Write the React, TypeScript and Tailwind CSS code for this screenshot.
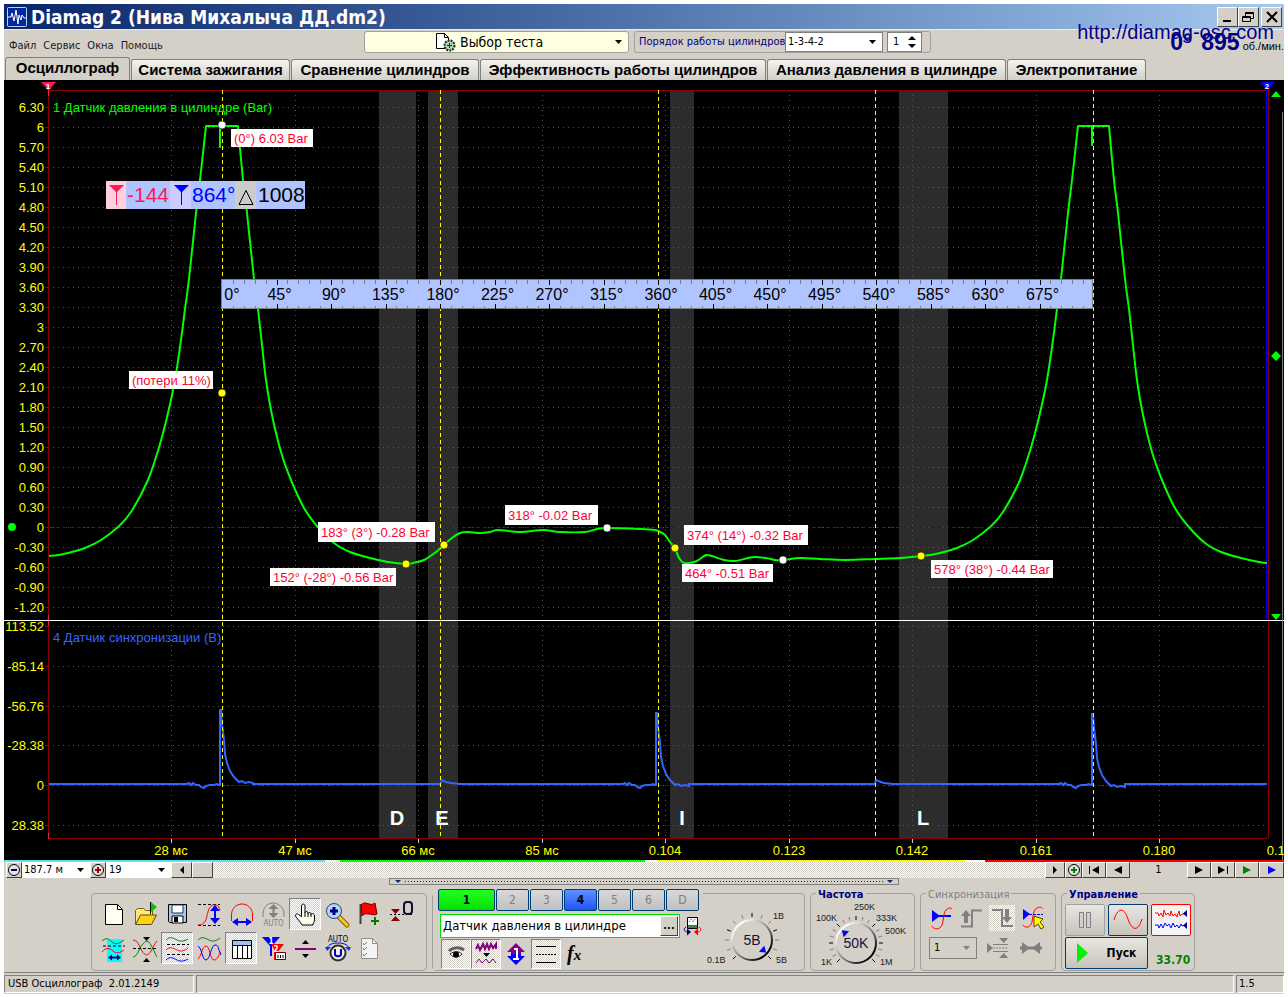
import { useState } from "react";
import type { ReactNode } from "react";

type Pt = [number, number];

const TABS = [
  { name: "Осциллограф", width: "w-[125px]" },
  { name: "Система зажигания", width: "w-[159px]" },
  { name: "Сравнение цилиндров", width: "w-[188px]" },
  { name: "Эффективность работы цилиндров", width: "w-[286px]" },
  { name: "Анализ давления в цилиндре", width: "w-[239px]" },
  { name: "Электропитание", width: "w-[139px]" },
];

const PRESSURE_TICKS = [
  "6.30", "6", "5.70", "5.40", "5.10", "4.80", "4.50", "4.20", "3.90", "3.60", "3.30", "3", "2.70",
  "2.40", "2.10", "1.80", "1.50", "1.20", "0.90", "0.60", "0.30", "0", "-0.30", "-0.60", "-0.90", "-1.20",
];

const SYNC_TICKS = [
  { y: 626, label: "113.52" },
  { y: 666, label: "-85.14" },
  { y: 706, label: "-56.76" },
  { y: 745, label: "-28.38" },
  { y: 785, label: "0" },
  { y: 825, label: "28.38" },
];

const TIME_TICKS = [
  { x: 171, label: "28 мс" },
  { x: 295, label: "47 мс" },
  { x: 418, label: "66 мс" },
  { x: 542, label: "85 мс" },
  { x: 665, label: "0.104" },
  { x: 789, label: "0.123" },
  { x: 912, label: "0.142" },
  { x: 1036, label: "0.161" },
  { x: 1159, label: "0.180" },
  { x: 1283, label: "0.199" },
];

const ZONES = [
  { x: 379, w: 37, letter: "D", at: 397 },
  { x: 428, w: 30, letter: "E", at: 442 },
  { x: 670, w: 24, letter: "I", at: 682 },
  { x: 899, w: 49, letter: "L", at: 923 },
];

const CYCLE_LINES = [222, 440, 658, 875, 1093];

const NOTES = [
  { x: 231, y: 129, w: 82, h: 18, text: "(0°) 6.03 Bar" },
  { x: 129, y: 371, w: 84, h: 18, text: "(потери 11%)" },
  { x: 270, y: 568, w: 126, h: 18, text: "152° (-28°) -0.56 Bar" },
  { x: 318, y: 522, w: 117, h: 20, text: "183° (3°) -0.28 Bar" },
  { x: 505, y: 505, w: 93, h: 20, text: "318° -0.02 Bar" },
  { x: 684, y: 525, w: 124, h: 20, text: "374° (14°) -0.32 Bar" },
  { x: 682, y: 564, w: 91, h: 18, text: "464° -0.51 Bar" },
  { x: 931, y: 560, w: 122, h: 18, text: "578° (38°) -0.44 Bar" },
];

const DOTS = [
  { x: 222, y: 125, c: "#fff" },
  { x: 222, y: 393, c: "#ff0" },
  { x: 406, y: 564, c: "#ff0" },
  { x: 444, y: 545, c: "#ff0" },
  { x: 607, y: 528, c: "#fff" },
  { x: 675, y: 548, c: "#ff0" },
  { x: 783, y: 560, c: "#fff" },
  { x: 921, y: 556, c: "#ff0" },
];

const RISE: Pt[] = [
  [49, 556], [58, 555], [68, 553], [85, 548], [101, 540], [118, 527], [131, 512], [148, 480], [160, 444],
  [168, 413], [175, 380], [181, 340], [185, 309], [189, 279], [196, 213], [200, 180], [206, 126],
];

const FALL: Pt[] = [
  [238, 126], [243, 180], [247, 213], [254, 279], [258, 309], [262, 345], [266, 380], [272, 415],
  [281, 452], [291, 480], [304, 508], [317, 526], [334, 543], [350, 552], [370, 558], [388, 562],
];

const MIDDLE: Pt[] = [
  [406, 564], [413, 563], [424, 560], [436, 552], [444, 545], [452, 538], [460, 533], [468, 532], [480, 533],
  [490, 532], [498, 530], [520, 532], [543, 530], [560, 532], [585, 532], [597, 529], [607, 528], [640, 529],
  [655, 530], [660, 532], [665, 535], [670, 542], [675, 548], [679, 558], [684, 563], [694, 562], [700, 559],
  [706, 555], [712, 556], [724, 560], [735, 561], [748, 558], [755, 557], [766, 558], [775, 560], [783, 560],
  [800, 558], [820, 559], [845, 560], [875, 559], [900, 558],
];

const CYCLE = 872;
const shift = (pts: Pt[], dx: number): Pt[] => pts.map(([x, y]) => [x + dx, y]);

// Catmull-Rom through the samples
function smooth(pts: Pt[], start = "M") {
  let d = `${start}${pts[0][0]} ${pts[0][1]}`;
  for (let i = 0; i < pts.length - 1; i++) {
    const p0 = pts[i - 1] ?? pts[i];
    const p1 = pts[i];
    const p2 = pts[i + 1];
    const p3 = pts[i + 2] ?? p2;
    d += `C${p1[0] + (p2[0] - p0[0]) / 6} ${p1[1] + (p2[1] - p0[1]) / 6} ${p2[0] - (p3[0] - p1[0]) / 6} ${p2[1] - (p3[1] - p1[1]) / 6} ${p2[0]} ${p2[1]}`;
  }
  return d;
}

const PRESSURE_PATH =
  smooth(RISE) +
  "H220V147V126" +
  smooth([...FALL, ...MIDDLE, [921, 556], ...shift(RISE.slice(1), CYCLE)], "L") +
  "H1092V145V126" +
  smooth([...shift(FALL, CYCLE - 1), [1267, 563]], "L");

const spike = (x: number, top: number) =>
  `H${x - 33}l2-1 2 2 2-2 3 2 3 0 2 2 3 1 2-2 4-1 4 0 3-1 2 1H${x}V${top}h1l1 14 2 16 1 14 2 9 3 8 4 6 5 5 3-1 3 2 4-1 4 1V784`;
const SYNC_PATH = `M49 784${spike(220, 710)}H440l2-4 4 2 5 1 9 1${spike(656, 713)}H875l1-4 5 2 3 1 9 1${spike(1092, 714)}H1267`;

const ctl = "border border-white border-r-[#404040] border-b-[#404040] bg-[#d4d0c8] flex items-center justify-center shrink-0";
const hatch = "bg-[repeating-conic-gradient(#ffffff_0_25%,#d4d0c8_0_50%)] bg-[length:2px_2px]";

function Chart() {
  return (
    <svg viewBox="4 80 1280 780" className="block w-full bg-black font-['Liberation_Sans',sans-serif]" role="img" aria-label="Осциллограмма">
      <g shapeRendering="crispEdges">
        {ZONES.map((z) => <rect key={z.letter} x={z.x} y={91} width={z.w} height={747} fill="#2c2c2c" />)}
        {PRESSURE_TICKS.map((t, i) => (
          <path key={t} d={`M53 ${107.5 + i * 20}H1267`} stroke="#555" strokeDasharray="1 4" />
        ))}
        {SYNC_TICKS.map((t) => <path key={t.label} d={`M53 ${t.y + 0.5}H1267`} stroke="#555" strokeDasharray="1 4" />)}
        {TIME_TICKS.slice(0, 9).map((t) => (
          <g key={t.label}>
            <path d={`M${t.x + 0.5} 95V838`} stroke="#555" strokeDasharray="1 4" />
            <path d={`M${t.x + 0.5} 839v4`} stroke="#ccc" />
          </g>
        ))}
        <path d="M49 527.5H1267M49 785.5H1267" stroke="#8b0000" strokeDasharray="4 3" />
        <path d="M48.5 90V838.5H1268" fill="none" stroke="#8b0000" />
        <path d="M48 90.5H1268V838" fill="none" stroke="#8b0000" />
        <path d="M1266.5 90V620" stroke="#0000ff" />
        <path d="M48.5 84V96M48.5 615V626M48.5 833V839" stroke="#ff1a55" />
        {PRESSURE_TICKS.map((t, i) => <path key={t} d={`M45 ${107.5 + i * 20}h4`} stroke="#8b0000" />)}
        {SYNC_TICKS.map((t) => <path key={t.label} d={`M45 ${t.y + 0.5}h4`} stroke="#8b0000" />)}
        <path d="M4 620.5H1284" stroke="#fff" />
        <path d="M1282.500 112V860" stroke="#808080" />
      </g>

      <g fill="#ffff00" fontSize="13">
        {PRESSURE_TICKS.map((t, i) => <text key={t} x={44} y={112 + i * 20} textAnchor="end">{t}</text>)}
        {SYNC_TICKS.map((t) => <text key={t.label} x={44} y={t.y + 5} textAnchor="end">{t.label}</text>)}
        {TIME_TICKS.map((t) => <text key={t.label} x={t.x} y={855} textAnchor="middle">{t.label}</text>)}
      </g>

      <path d={SYNC_PATH} fill="none" stroke="#3366ff" strokeWidth="2" />
      <path d={PRESSURE_PATH} fill="none" stroke="#00ff00" strokeWidth="2" strokeLinejoin="round" />
      {CYCLE_LINES.map((x) => (
        <path key={x} d={`M${x + 0.5} 90V838`} stroke="#ffff00" strokeDasharray="4 3" shapeRendering="crispEdges" />
      ))}

      <text x={53} y={112} fontSize="13" fill="#00ff00">1 Датчик давления в цилиндре (Bar)</text>
      <text x={53} y={642} fontSize="13" fill="#3366ff">4 Датчик синхронизации (В)</text>
      {ZONES.map((z) => (
        <text key={z.letter} x={z.at} y={825} textAnchor="middle" fontSize="20" fontWeight="bold" fill="#fff">{z.letter}</text>
      ))}

      <path d="M41 82h15l-7 8h-1z" fill="#ff1a55" />
      <path d="M1260 82h15l-7 8h-1z" fill="#0000ff" />
      <text x={48} y={89} textAnchor="middle" fontSize="8" fontWeight="bold" fill="#fff">1</text>
      <text x={1267} y={89} textAnchor="middle" fontSize="8" fontWeight="bold" fill="#fff">2</text>
      <g fill="#00ff00">
        <path d="M1271 97h10l-5-6z" />
        <path d="M1276 351l5 5-5 5-5-5z" />
        <path d="M1271 614h10l-5 6z" />
        <circle cx={12} cy={527} r={4} />
      </g>

      {/* cursor readout */}
      <rect x={106} y={181} width={199} height={28} fill="#b0c4ff" />
      <rect x={106} y={181} width={20} height={28} fill="#ffd0e0" />
      <rect x={170} y={181} width={21} height={28} fill="#ccccff" />
      <rect x={235} y={181} width={21} height={28} fill="#cccccc" />
      <path d="M109 185h15l-7 7v13h-1v-13z" fill="#ff1a55" />
      <path d="M174 185h15l-7 7v13h-1v-13z" fill="#0000ff" />
      <path d="M246 190.500l7 14h-14z" fill="none" stroke="#000" />
      <g fontSize="21">
        <text x={127} y={202} fill="#ff1a55">-144</text>
        <text x={192} y={202} fill="#0000ff">864°</text>
        <text x={258} y={202} fill="#000">1008</text>
      </g>

      {/* degree ruler */}
      <rect x={221.500} y={279.500} width={871} height={29} fill="#b0c4ff" stroke="#808080" />
      {Array.from({ length: 79 }, (_, i) => {
        const x = Math.round(222 + (i + 1) * 10.9) + 0.5;
        return (i + 1) % 5 === 0 ? (
          <path key={i} d={`M${x} 280v5M${x} 304v5`} stroke="#000" />
        ) : (
          <path key={i} d={`M${x} 280v4M${x} 306v2`} stroke="#808080" />
        );
      })}
      {Array.from({ length: 16 }, (_, i) => (
        <text key={i} x={i ? 225 + i * 54.5 : 232} y={300} textAnchor="middle" fontSize="16">{i * 45}°</text>
      ))}

      {NOTES.map((n) => (
        <g key={n.text}>
          <rect x={n.x} y={n.y} width={n.w} height={n.h} fill="#fff" />
          <text x={n.x + 3} y={n.y + n.h / 2 + 5} fontSize="13" fill="#ff0033">{n.text}</text>
        </g>
      ))}
      {DOTS.map((p) => <circle key={p.x + p.y} cx={p.x} cy={p.y} r={4} fill={p.c} stroke="#000" strokeWidth="0.6" />)}
    </svg>
  );
}

function Arrow({ d, fill = "#000" }: { d: string; fill?: string }) {
  return <svg width="12" height="10" viewBox="0 0 12 10" aria-hidden="true"><path d={d} fill={fill} /></svg>;
}

const RIGHT = "M2 1l8 4-8 4z";
const LEFT = "M10 1L2 5l8 4z";

interface DropProps {
  label: string;
  value: string;
  wrap: string;
  text: string;
  arrow?: string;
  disabled?: boolean;
  children?: ReactNode;
}

function Drop({ label, value, wrap, text, arrow = "#000", disabled, children }: DropProps) {
  return (
    <span className={`relative flex shrink-0 items-center ${wrap}`}>
      {children}
      <select aria-label={label} disabled={disabled} className={`h-full w-full appearance-none bg-transparent text-black outline-none ${text}`}>
        <option>{value}</option>
      </select>
      <svg className="pointer-events-none absolute right-[6px]" width="7" height="4" viewBox="0 0 7 4" aria-hidden="true">
        <path d="M0 0h7L3.500 4z" fill={arrow} />
      </svg>
    </span>
  );
}

function Tool({ title, pressed, children }: { title: string; pressed?: boolean; children: ReactNode }) {
  return (
    <button
      type="button"
      title={title}
      className={`size-8 border ${pressed ? `border-[#808080] border-r-white border-b-white ${hatch}` : "border-transparent"}`}
    >
      <svg width="30" height="30" viewBox="1 1 30 30" fill="none" aria-hidden="true">{children}</svg>
    </button>
  );
}

function Group({ title, tone, className, children }: { title?: string; tone?: string; className: string; children: ReactNode }) {
  return (
    <section className={`relative h-[78px] shrink-0 rounded-[4px] border border-[#a0a0a0] ${className}`}>
      {title && <h2 className={`absolute -top-[6px] left-[5px] bg-[#d4d0c8] px-[2px] text-[11px] leading-[13px] ${tone}`}>{title}</h2>}
      {children}
    </section>
  );
}

function MainTools() {
  return (
    <Group className="w-[336px]">
      <div className="grid grid-cols-[repeat(10,32px)] gap-y-[2px] pt-[4px] pl-[5px]">
        <Tool title="Новый">
          <path d="M8.500 6.500h12l5 5v15h-17z" fill="#fffff0" stroke="#000" />
          <path d="M20.500 6.500v5h5" stroke="#000" />
        </Tool>
        <Tool title="Открыть">
          <path d="M6.500 26V12.500l2-2h6l2 2h7V17" fill="#ffe680" stroke="#806000" />
          <path d="M6.500 26.500l5-9.500h16l-5 9.500z" fill="#ffd21a" stroke="#604800" />
          <path d="M21.500 4v12" stroke="#000" />
          <path d="M22 4l6 5-6 5z" fill="#00c800" />
        </Tool>
        <Tool title="Сохранить">
          <path d="M7.500 6.500h18v18h-17l-1-1z" fill="#a8c8f0" stroke="#000" />
          <path d="M11 7h11v8H11z" fill="#fff" stroke="#203060" />
          <path d="M11 18h11v7H11z" fill="#fff" stroke="#000" />
          <path d="M13 19h4v5h-4z" fill="#000" />
        </Tool>
        <Tool title="Размах по вертикали">
          <path d="M5 6.500h22M5 27.500h22" stroke="#000" strokeDasharray="3 2" />
          <path d="M5 27c8 0 8-6 10-13 1-5 4-8 8-7 3 1 3 3 4 5" stroke="#f00" />
          <path d="M22 9v15" stroke="#00f" strokeWidth="2" />
          <path d="M22 7l5 6H17zM22 26l5-6H17z" fill="#00f" />
        </Tool>
        <Tool title="Размах по горизонтали">
          <path d="M6.500 23v-6c0-7 5-11 10.500-11s10.500 4 10.500 11v6" stroke="#f00" />
          <path d="M9 24h16" stroke="#00f" strokeWidth="2" />
          <path d="M7 24l6-4v8zM27 24l-6-4v8z" fill="#00f" />
        </Tool>
        <Tool title="Автомасштаб">
          <path d="M6 19v-3C6 9 11 5 16 5s11 4 11 11v3" stroke="#808080" />
          <path d="M16.500 8v11" stroke="#808080" strokeWidth="2" />
          <path d="M16.500 6l5 5h-10zM16.500 20l5-5h-10z" fill="#808080" />
          <text x="16.500" y="28" textAnchor="middle" fontSize="8" fill="#808080">AUTO</text>
        </Tool>
        <Tool title="Рука" pressed>
          <path
            d="M12.500 18.500V8c0-2.500 3.500-2.500 3.500 0v7c0-2 3-2 3 0v1c0-2 3-2 3 0v1c0-2 3.500-2 3.500 1v4c0 2-1.500 3-1.500 5H13c-1-3-6-7-6.500-9s2-3 3.500-1z"
            fill="#fffff0" stroke="#000"
          />
          <path d="M16 15v4M19 16v3M22 17v2" stroke="#000" />
        </Tool>
        <Tool title="Лупа">
          <path d="M18 19l8 8" stroke="#806000" strokeWidth="5" strokeLinecap="round" />
          <path d="M18 19l8 8" stroke="#ffc820" strokeWidth="3" strokeLinecap="round" />
          <circle cx="13" cy="13" r="7.500" fill="#b0d8f8" stroke="#304080" />
          <path d="M13 9v8M9 13h8" stroke="#000080" strokeWidth="3" />
        </Tool>
        <Tool title="Поставить метку">
          <path d="M7.500 6v20" stroke="#404040" strokeWidth="2" />
          <path d="M8 7c3-3 5-2 8-1s4 0 6-1l2 11c-3 2-5 0-8 0s-4-1-7 2z" fill="#f00" stroke="#600" />
          <path d="M22 19v8M18 23h8" stroke="#008000" strokeWidth="2" />
        </Tool>
        <Tool title="Обнулить">
          <path d="M5 16.500h23" stroke="#000" strokeDasharray="2 2" />
          <path d="M6 11h9l-4.500 5zM6 23h9l-4.500-5z" fill="#800000" />
          <rect x="19" y="4" width="8" height="12" rx="3" fill="#d4d0c8" stroke="#101030" strokeWidth="2" />
        </Tool>

        <Tool title="Совместить">
          <path d="M10 7h15v23H10z" fill="#00ffff" />
          <path d="M5 9c4-4 7-2 10 1s7 2 12-2" stroke="#008000" />
          <path d="M6 14h22" stroke="#000" strokeDasharray="3 2" />
          <path d="M5 20c4-5 8-4 11-1s7 2 11-1" stroke="#f00" />
          <path d="M13 25.500h9" stroke="#000080" strokeWidth="2" />
          <path d="M11 25.500l4-3v6zM24 25.500l-4-3v6z" fill="#000080" />
        </Tool>
        <Tool title="Симметрия">
          <path d="M4 8c5 0 6 6 9 11s6 5 9 0 4-8 6-10" stroke="#f00" />
          <path d="M4 25c5-1 5-7 9-12s6-5 9 0 4 9 6 12" stroke="#008000" />
          <path d="M4 16.500h24" stroke="#000" strokeDasharray="3 2" />
          <path d="M14 5h7l-3.500 4zM14 30h7l-3.500-4z" fill="#000" />
        </Tool>
        <Tool title="Раздельно" pressed>
          <path d="M5 8c4-4 7-2 11 0s7 1 11-1" stroke="#008000" />
          <path d="M6 12.500h22M6 22.500h22" stroke="#000" strokeDasharray="3 2" />
          <path d="M5 18c4-4 7-2 11 0s7 1 11-2" stroke="#f00" />
          <path d="M5 28c4-4 7-2 11 0s7 1 11-1" stroke="#00f" />
        </Tool>
        <Tool title="Вместе">
          <path d="M5 8c4-4 7-2 11 0s7 1 11-2" stroke="#008000" />
          <path d="M5 27c4-4 4-13 8-13s4 14 8 14 4-5 7-8" stroke="#f00" />
          <path d="M5 14c4 2 4 14 8 14s5-15 9-15 3 4 6 10" stroke="#00f" />
        </Tool>
        <Tool title="Таблица" pressed>
          <path d="M7.500 8.500h19v18h-19z" fill="#fff" stroke="#000" />
          <path d="M8 9h18v4H8z" fill="#a0c0f0" />
          <path d="M7 13.500h19M12.500 13v13M17.500 13v13M22.500 13v13" stroke="#000" />
        </Tool>
        <Tool title="Линейки">
          <path d="M5 5h18l-8 9v10h-2V14z" fill="#00f" />
          <path d="M14 12h13l-7 9v7h-3V17z" fill="#f00" />
          <text x="14" y="12" textAnchor="middle" fontSize="8" fontWeight="bold" fill="#fff">1</text>
          <text x="19" y="20" textAnchor="middle" fontSize="8" fontWeight="bold" fill="#fff">2</text>
          <path d="M18.500 20.500h10v7h-10z" fill="#fff" stroke="#600" />
          <path d="M21 23v3M23.500 23v3M26 23v3" stroke="#000" />
        </Tool>
        <Tool title="Разделитель">
          <path d="M6 17h21" stroke="#800080" strokeWidth="2" />
          <path d="M13 12h7l-3.500-4zM13 22h7l-3.500 4z" fill="#000" />
        </Tool>
        <Tool title="Авто напряжение">
          <text x="17" y="10" textAnchor="middle" fontSize="8" fill="#000">AUTO</text>
          <circle cx="17" cy="21" r="7.500" fill="#eee" stroke="#303030" strokeWidth="2" />
          <path d="M6 16c2-4 6-5 11-5s9 1 11 5" stroke="#00f" />
          <path d="M4 15h6l-4 4zM30 15h-6l4 4z" fill="#0040c0" />
          <path d="M14 17v5c0 3 6 3 6 0v-5" stroke="#0000c0" strokeWidth="2" />
        </Tool>
        <Tool title="Список">
          <path d="M8.500 6.500h11l5 5v15h-16z" fill="#f4f4f0" stroke="#909090" />
          <path d="M19.500 6.500v5h5" stroke="#909090" />
          <path d="M10 11l1 2 3-3M10 16l1 2 3-3M10 22l1 2 3-3" stroke="#808080" />
        </Tool>
      </div>
    </Group>
  );
}

const CHANNELS = ["1", "2", "3", "4", "5", "6", "D"];

function ChannelButton({ name }: { name: string }) {
  const look =
    name === "1" ? "w-[57px] bg-linear-to-b from-[#20ff20] to-[#00e000] font-bold text-black"
    : name === "4" ? "w-[33px] bg-linear-to-b from-[#6090ff] to-[#2050ff] font-bold text-black"
    : "w-[33px] bg-linear-to-b from-[#d8d8d8] to-[#c0c0c0] text-[#808080]";
  return (
    <button type="button" className={`h-[22px] rounded-[2px] border border-[#003c74] text-[12px] leading-[20px] ${look}`}>{name}</button>
  );
}

function Knob({ cx, cy, ticks, pointer, value, labels }: { cx: number; cy: number; ticks: number; pointer: number; value: string; labels: [number, number, string][] }) {
  return (
    <svg width="102" height="76" viewBox="0 0 102 76" className="shrink-0 font-['Liberation_Sans',sans-serif]" role="img" aria-label={value}>
      <defs>
        <linearGradient id={`rim${cx}`} x1="0" y1="0" x2="1" y2="1">
          <stop offset="0.15" stopColor="#fff" />
          <stop offset="0.55" stopColor="#808080" />
          <stop offset="0.85" stopColor="#000" />
        </linearGradient>
      </defs>
      {Array.from({ length: ticks }, (_, i) => {
        const a = ((135 + (270 / (ticks - 1)) * i) * Math.PI) / 180;
        return (
          <path
            key={i}
            d={`M${cx + Math.cos(a) * 23} ${cy + Math.sin(a) * 23}L${cx + Math.cos(a) * 27} ${cy + Math.sin(a) * 27}`}
            stroke={i % 3 ? "#808080" : "#000"}
          />
        );
      })}
      <circle cx={cx} cy={cy} r={20} fill="#d4d0c8" stroke={`url(#rim${cx})`} strokeWidth="2" />
      <path d="M19 0l-6-4v8z" fill="#0000ff" transform={`translate(${cx} ${cy}) rotate(${pointer})`} />
      <text x={cx} y={cy + 5} textAnchor="middle" fontSize="14" fill="#101040">{value}</text>
      {labels.map(([x, y, t]) => <text key={t} x={x} y={y} fontSize="9" fill="#202020">{t}</text>)}
    </svg>
  );
}

function ChannelPanel() {
  const [name, setName] = useState("Датчик давления в цилиндре");
  return (
    <Group className="flex w-[373px]">
      <div className="-mt-[5px] w-[270px] shrink-0 bg-[#d4d0c8] pl-[5px]">
        <div className="flex gap-px">
          {CHANNELS.map((c) => <ChannelButton key={c} name={c} />)}
        </div>
        <div className="mt-[3px] ml-[2px] flex items-center gap-[3px]">
          <span className="flex h-[24px] w-[241px] items-center border border-[#00e000] bg-white pr-px">
            <input
              aria-label="Название канала"
              value={name}
              onChange={(e) => setName(e.target.value)}
              className="min-w-0 flex-1 px-[2px] text-[13px] text-black outline-none"
            />
            <button type="button" title="Выбрать" className={`${ctl} h-[20px] w-[18px] text-[11px] leading-[12px] font-bold`}>...</button>
          </span>
          <button type="button" title="Поменять каналы">
            <svg width="20" height="20" viewBox="0 0 20 20" fill="none" aria-hidden="true">
              <path d="M4.500 1.500h10v11h-10z" fill="#fff" stroke="#000" />
              <path d="M5 9h9v3H5z" fill="#408040" />
              <path d="M6 6l2-3 2 3 2-3" stroke="#444" strokeDasharray="1 1" />
              <path d="M3 11c-3 2-2 5 2 5" stroke="#000080" />
              <path d="M4 12.500l4 3.500-4 3.500z" fill="#000080" />
              <path d="M16 11c3 2 2 5-2 5" stroke="#f00" />
              <path d="M15 12.500l-4 3.500 4 3.500z" fill="#f00" />
            </svg>
          </button>
        </div>
        <div className="mt-px ml-[3px] flex h-[30px] items-center">
          <Small title="Показать" pressed>
            <path d="M8 12c4-4 11-4 15-1" stroke="#606060" strokeWidth="3" />
            <path d="M9 15c4-3 9-3 12 0-3 4-9 4-12 0z" fill="#fff" stroke="#222" />
            <circle cx="15" cy="15.500" r="3" fill="#000" />
          </Small>
          <Small title="Фильтр" pressed>
            <path d="M5 10l2-4 2 5 3-6 2 5 2-5 2 5 2-5 2 4 3-4v5" stroke="#800080" strokeWidth="2" />
            <path d="M12 14h7l-3.500 4z" fill="#000" />
            <path d="M5 24l3-4 3 4 4-4 3 4 4-4 3 4" stroke="#800080" />
          </Small>
          <Small title="Инвертировать">
            <path d="M15 4l9 9h-4v2H10v-2H6z" fill="#800080" />
            <path d="M15 26l9-9h-4v-2H10v2H6z" fill="#00f" />
            <path d="M13 10h3v9M12 20h6" stroke="#fff" strokeWidth="2" />
          </Small>
          <Small title="Линии" pressed>
            <path d="M5 7.500h20M5 23.500h20" stroke="#000" />
            <path d="M5 15.500h20" stroke="#000" strokeDasharray="2 1" />
          </Small>
          <button type="button" title="Функция" className="px-[6px] font-['Liberation_Serif',serif] text-[20px] leading-[22px] font-bold text-black italic">
            f<span className="text-[15px]">x</span>
          </button>
        </div>
      </div>
      <Knob
        cx={49} cy={46} ticks={13} pointer={42} value="5В"
        labels={[[4, 69, "0.1В"], [70, 25, "1В"], [73, 69, "5В"]]}
      />
    </Group>
  );
}

function Small({ title, pressed, children }: { title: string; pressed?: boolean; children: ReactNode }) {
  return (
    <button
      type="button"
      title={title}
      className={`size-[30px] border ${pressed ? `border-[#808080] border-r-white border-b-white ${hatch}` : "border-transparent"}`}
    >
      <svg width="28" height="28" viewBox="1 1 28 28" fill="none" aria-hidden="true">{children}</svg>
    </button>
  );
}

function SyncPanel() {
  return (
    <Group title="Синхронизация" tone="text-[#808080]" className="w-[136px]">
      <div className="flex flex-col gap-[6px] pt-[11px] pl-[8px]">
        <div className="flex items-center gap-[6px]">
          <button type="button" title="Уровень">
            <svg width="24" height="26" viewBox="0 0 24 26" fill="none" aria-hidden="true">
              <path d="M3 5l8 6-8 6z" fill="#00f" />
              <path d="M10 11h12" stroke="#00f" strokeWidth="2" />
              <path d="M3 21c2 4 8 4 10-1s1-12 4-15 5-2 6-1" stroke="#f00" />
            </svg>
          </button>
          <button type="button" title="По фронту">
            <svg width="24" height="26" viewBox="0 0 24 26" fill="none" aria-hidden="true">
              <path d="M2 21.500h11V5.500h10" stroke="#808080" strokeWidth="2" />
              <path d="M7 5l5 6H9v7H5v-7H2z" fill="#808080" />
            </svg>
          </button>
          <button type="button" title="По спаду" className={hatch}>
            <svg width="26" height="26" viewBox="0 0 26 26" fill="none" aria-hidden="true">
              <path d="M3 5h10v16h11" stroke="#808080" strokeWidth="2" />
              <path d="M18 18l5-6h-3V4h-4v8h-3z" fill="#808080" />
            </svg>
          </button>
          <button type="button" title="Выбрать уровень">
            <svg width="24" height="26" viewBox="0 0 24 26" fill="none" aria-hidden="true">
              <path d="M2 4l7 5-7 6z" fill="#00f" />
              <path d="M8 9.500h14" stroke="#00f" strokeDasharray="3 1" />
              <path d="M2 20c3 4 8 2 9-3s1-12 5-14 5 0 6 1" stroke="#f00" />
              <path d="M13 11l9 3-3 3 4 5-3 2-3-5-4 3z" fill="#ff0" stroke="#604000" />
            </svg>
          </button>
        </div>
        <div className="flex items-center gap-[9px]">
          <Drop label="Канал синхронизации" value="1" wrap="h-[22px] w-[48px] border border-[#808080]" text="pl-[4px] text-[11px]" arrow="#808080" disabled />
          <button type="button" title="Порог">
            <svg width="24" height="22" viewBox="0 0 24 22" aria-hidden="true">
              <path d="M1 6l6 5-6 5zM13 1h9l-4 5zM13 21h9l-4-5z" fill="#808080" />
              <path d="M7 7.500h15M7 14.500h15" stroke="#808080" />
              <path d="M7 11h15" stroke="#808080" strokeDasharray="2 1" />
            </svg>
          </button>
          <button type="button" title="Сжать">
            <svg width="24" height="22" viewBox="0 0 24 22" aria-hidden="true">
              <path d="M11 11L3 5v12zM13 11l8-6v12z" fill="#808080" />
              <path d="M1 11h22" stroke="#808080" strokeWidth="3" />
            </svg>
          </button>
        </div>
      </div>
    </Group>
  );
}

function ControlPanel() {
  const face = "flex items-center justify-center rounded-[2px] border bg-linear-to-b from-[#e8e6e2] to-[#c8c4bc]";
  return (
    <Group title="Управление" tone="font-bold text-[#000080]" className="w-[134px]">
      <div className="grid grid-cols-[repeat(3,40px)] gap-x-[3px] gap-y-px pt-[10px] pl-[3px]">
        <button type="button" title="Пауза" className={`${face} h-[32px] border-[#a0a0a0]`}>
          <svg width="14" height="18" viewBox="0 0 14 18" fill="#d0d0d0" stroke="#808080" aria-hidden="true">
            <path d="M1.500 1.500h4v15h-4zM8.500 1.500h4v15h-4z" />
          </svg>
        </button>
        <button type="button" title="Непрерывно" className={`${face} h-[32px] border-[#003c74]`}>
          <svg width="30" height="22" viewBox="0 0 30 22" fill="none" stroke="#f00" aria-hidden="true">
            <path d="M1 11C5-2 11-2 15 10s10 13 14 0" />
          </svg>
        </button>
        <button type="button" title="Запись" className="flex h-[32px] items-center justify-center rounded-[2px] border border-[#f00] bg-[#f4f4f4]">
          <svg width="34" height="22" viewBox="0 0 34 22" fill="none" aria-hidden="true">
            <path d="M1 4h3l1 3 2-3 2 4 1-7 2 5 2-2 2 3 1-5 2 5 2-2 2 3 2-6 1 5 2-2h4" stroke="#f00" />
            <path d="M1 16h3l1 3 2-4 2 4 2-5 2 3 2-2 2 4 2-5 2 4 2-2 2 3 2-4 1 2 3-1h1" stroke="#00f" />
            <path d="M33 1v7l-4-3.500zM33 13v7l-4-3.500z" fill="#000080" />
          </svg>
        </button>
        <button type="button" className={`${face} col-span-2 h-[32px] gap-[18px] border-[#003c74] text-[12px] font-bold text-black`}>
          <svg width="12" height="20" viewBox="0 0 12 20" aria-hidden="true"><path d="M0 0l11 10L0 20z" fill="#00f000" /></svg>
          Пуск
        </button>
        <output className="self-end pb-[2px] pl-[5px] text-[12px] leading-[14px] font-bold text-[#008000]">33.70</output>
      </div>
    </Group>
  );
}

export default function App() {
  const [tab, setTab] = useState(0);
  const [cyl, setCyl] = useState("1");

  return (
    <div className="min-h-screen bg-white px-[4px] pt-[4px] font-['DejaVu_Sans_Condensed','DejaVu_Sans',sans-serif] text-black">
      <div className="bg-[#d4d0c8]">
        <header className="flex h-[25px] items-center gap-[4px] bg-linear-to-r from-[#0a246a] to-[#a6caf0] pr-[2px] pl-[3px]">
          <svg width="20" height="20" viewBox="0 0 20 20" fill="none" aria-hidden="true">
            <rect x="0.500" y="0.500" width="19" height="19" rx="1" fill="#0028a0" stroke="#c0d0f0" />
            <path d="M1 10h3l1-4 2 8 2-11 2 14 1-9 2 5 1-5 2 3h2" stroke="#fff" />
          </svg>
          <h1 className="text-[19px] leading-[24px] font-bold whitespace-nowrap text-white">Diamag 2 (Нива Михалыча ДД.dm2)</h1>
          <div className="ml-auto flex">
            <button type="button" title="Свернуть" className={`${ctl} h-[20px] w-[21px]`}>
              <svg width="12" height="12" viewBox="0 0 12 12"><path d="M1 10h8" stroke="#000" strokeWidth="2" /></svg>
            </button>
            <button type="button" title="Развернуть" className={`${ctl} h-[20px] w-[21px]`}>
              <svg width="13" height="12" viewBox="0 0 13 12" fill="none" stroke="#000">
                <path d="M3.500 5V1.500h8v6H9M3 2.500h9M0.500 5.500h8v5h-8zM0 6.500h9" />
              </svg>
            </button>
            <button type="button" title="Закрыть" className={`${ctl} ml-[2px] h-[20px] w-[21px]`}>
              <svg width="12" height="12" viewBox="0 0 12 12"><path d="M1 1l10 10M11 1L1 11" stroke="#000" strokeWidth="2" /></svg>
            </button>
          </div>
        </header>

        <div className="relative flex h-[28px] items-start border-t border-white/60 pt-px">
          <nav className="flex w-[360px] shrink-0 gap-[7px] pt-[8px] pl-[5px] text-[11px] leading-[14px] text-[#202020]">
            <a href="#file">Файл</a>
            <a href="#service">Сервис</a>
            <a href="#windows">Окна</a>
            <a href="#help">Помощь</a>
          </nav>
          <Drop
            label="Выбор теста" value="Выбор теста" text="pl-[95px] text-[14px] text-[#000080]"
            wrap="h-[22px] w-[265px] rounded-[3px] border border-[#a0a0a0] bg-[#ffffe1]"
            arrow="#000"
          >
            <svg className="pointer-events-none absolute left-[71px]" width="20" height="20" viewBox="0 0 20 20" fill="none" aria-hidden="true">
              <path d="M0.500 1.500h8l4 4v11h-12z" fill="#fff" stroke="#000" />
              <path d="M8.500 1.500v4h4" stroke="#000" />
              <circle cx="13.500" cy="13.500" r="5" fill="#b0d0b0" stroke="#203020" strokeWidth="2" strokeDasharray="2 1" />
              <path d="M13.500 11v5M11 13.500h5" stroke="#203020" />
            </svg>
          </Drop>
          <div className="ml-[5px] flex h-[22px] shrink-0 items-center rounded-[3px] border border-[#a0a0a0] pr-[8px] pl-[4px]">
            <span className="w-[146px] text-[11px] whitespace-nowrap text-[#000080]">Порядок работы цилиндров</span>
            <Drop label="Порядок работы цилиндров" value="1-3-4-2" wrap="h-[20px] w-[98px] border border-[#808080] bg-white" text="pl-[2px] text-[11px]" />
            <span className="ml-[4px] flex h-[20px] w-[35px] items-center border border-[#808080] bg-white">
              <input
                aria-label="Цилиндр" value={cyl} onChange={(e) => setCyl(e.target.value)}
                className="w-[20px] pl-[5px] text-[11px] outline-none"
              />
              <svg width="8" height="14" viewBox="0 0 8 14" aria-hidden="true"><path d="M0 5h8L4 1zM0 9h8l-4 4z" /></svg>
            </span>
          </div>
          <p className="ml-auto flex items-baseline gap-[3px] font-['Liberation_Sans',sans-serif] whitespace-nowrap text-[#000080]">
            <span className="text-[23px] leading-[22px] font-bold">0°</span>
            <span className="ml-[6px] text-[23px] leading-[22px] font-bold">895</span>
            <span className="text-[11px] text-black">об./мин.</span>
          </p>
          <a href="#site" className="absolute right-[10px] -top-[10px] font-['Liberation_Sans',sans-serif] text-[20px] leading-[24px] text-[#000090]">http://diamag-osc.com</a>
        </div>

        <div role="tablist" className="flex h-[23px] items-end gap-px pl-px font-['Liberation_Sans',sans-serif] text-[15px] font-bold">
          {TABS.map((t, i) => (
            <button
              key={t.name}
              type="button"
              role="tab"
              aria-selected={i === tab}
              onClick={() => setTab(i)}
              className={`flex justify-center rounded-t-[3px] border border-b-0 border-[#808080] leading-[19px] whitespace-nowrap ${t.width} ${
                i === tab ? "h-[23px] bg-[#d4d0c8]" : "h-[21px] bg-linear-to-b from-[#f4f3f1] to-[#d4d0c8]"
              }`}
            >
              {t.name}
            </button>
          ))}
        </div>

        <Chart />

        <div className="flex h-[2px]">
          <span className="w-[321px] bg-[#60e0f0]" />
          <span className="w-[15px] bg-[#e8f8e8]" />
          <span className="w-[305px] bg-[#00ff00]" />
          <span className="w-[12px] bg-white" />
          <span className="w-[308px] bg-[#ffff00]" />
          <span className="w-[20px] bg-white" />
          <span className="flex-1 bg-[#ff0000]" />
        </div>

        <div className="flex h-[16px] items-stretch pl-[2px] text-[11px]">
          <button type="button" title="Меньше" className={`${ctl} w-[16px]`}>
            <svg width="12" height="12" viewBox="0 0 12 12" fill="#e8e6e0" stroke="#000"><circle cx="6" cy="6" r="5.500" /><path d="M3 6h6" stroke="#000080" strokeWidth="2" /></svg>
          </button>
          <Drop label="Развёртка" value="187.7 м" wrap="w-[68px] bg-white" text="pl-[2px] text-[11px]" />
          <button type="button" title="Больше" className={`${ctl} w-[16px]`}>
            <svg width="12" height="12" viewBox="0 0 12 12" fill="#e8e6e0" stroke="#000"><circle cx="6" cy="6" r="5.500" /><path d="M3 6h6M6 3v6" stroke="#a00000" strokeWidth="2" /></svg>
          </button>
          <Drop label="Шаг" value="19" wrap="w-[65px] bg-white" text="pl-[3px] text-[11px]" />
          <button type="button" title="Влево" className={`${ctl} w-[21px]`}><Arrow d="M8 1L4 5l4 4z" /></button>
          <div className={`flex flex-1 ${hatch}`}><span className={`${ctl} w-[21px]`} /></div>
          <button type="button" title="Вправо" className={`${ctl} w-[20px]`}><Arrow d="M4 1l4 4-4 4z" /></button>
          <button type="button" title="Добавить" className={`${ctl} w-[17px]`}>
            <svg width="12" height="12" viewBox="0 0 12 12" fill="#e8e6e0" stroke="#000"><circle cx="6" cy="6" r="5.500" /><path d="M3 6h6M6 3v6" stroke="#008000" strokeWidth="2" /></svg>
          </button>
          <button type="button" title="В начало" className={`${ctl} w-[24px]`}><Arrow d="M11 1L4 5l7 4zM1 1h1v8H1z" /></button>
          <button type="button" title="Назад" className={`${ctl} w-[24px]`}><Arrow d={LEFT} /></button>
          <span className="w-[57px] text-center leading-[16px]">1</span>
          <button type="button" title="Вперёд" className={`${ctl} w-[24px]`}><Arrow d={RIGHT} /></button>
          <button type="button" title="В конец" className={`${ctl} w-[24px]`}><Arrow d="M1 1l7 4-7 4zM10 1h1v8h-1z" /></button>
          <button type="button" title="Пуск кадра" className={`${ctl} w-[24px]`}><Arrow d={RIGHT} fill="#008000" /></button>
          <button type="button" title="Пуск всех" className={`${ctl} w-[25px]`}><Arrow d={RIGHT} fill="#0000ff" /></button>
        </div>

        <div className="mx-auto flex h-[7px] w-[510px] items-center gap-[4px] border border-[#808080] px-[5px]">
          <svg width="6" height="4" viewBox="0 0 6 4"><path d="M0 0h6L3 3z" fill="#0a246a" /></svg>
          <span className="h-px flex-1 bg-[repeating-linear-gradient(90deg,#0a246a_0_1px,transparent_1px_3px)]" />
          <svg width="6" height="4" viewBox="0 0 6 4"><path d="M0 0h6L3 3z" fill="#0a246a" /></svg>
        </div>

        <div className="flex gap-[5px] border-b border-[#808080] pt-[8px] pb-px pl-[87px]">
          <MainTools />
          <ChannelPanel />
          <Group title="Частота" tone="font-bold text-[#000080]" className="w-[105px]">
            <Knob
              cx={45} cy={49} ticks={19} pointer={222} value="50K"
              labels={[[43, 16, "250K"], [5, 27, "100K"], [65, 27, "333K"], [74, 40, "500K"], [10, 71, "1K"], [69, 71, "1M"]]}
            />
          </Group>
          <SyncPanel />
          <ControlPanel />
        </div>

        <footer className="flex gap-[2px] pt-[2px] pb-px text-[11px] leading-[16px]">
          <span className="w-[190px] border border-[#808080] border-r-white border-b-white pl-[3px] whitespace-pre">USB Осциллограф  2.01.2149</span>
          <span className="flex-1 border border-[#808080] border-r-white border-b-white" />
          <span className="w-[48px] border border-[#808080] border-r-white border-b-white pl-[2px]">1.5</span>
        </footer>
      </div>
    </div>
  );
}
